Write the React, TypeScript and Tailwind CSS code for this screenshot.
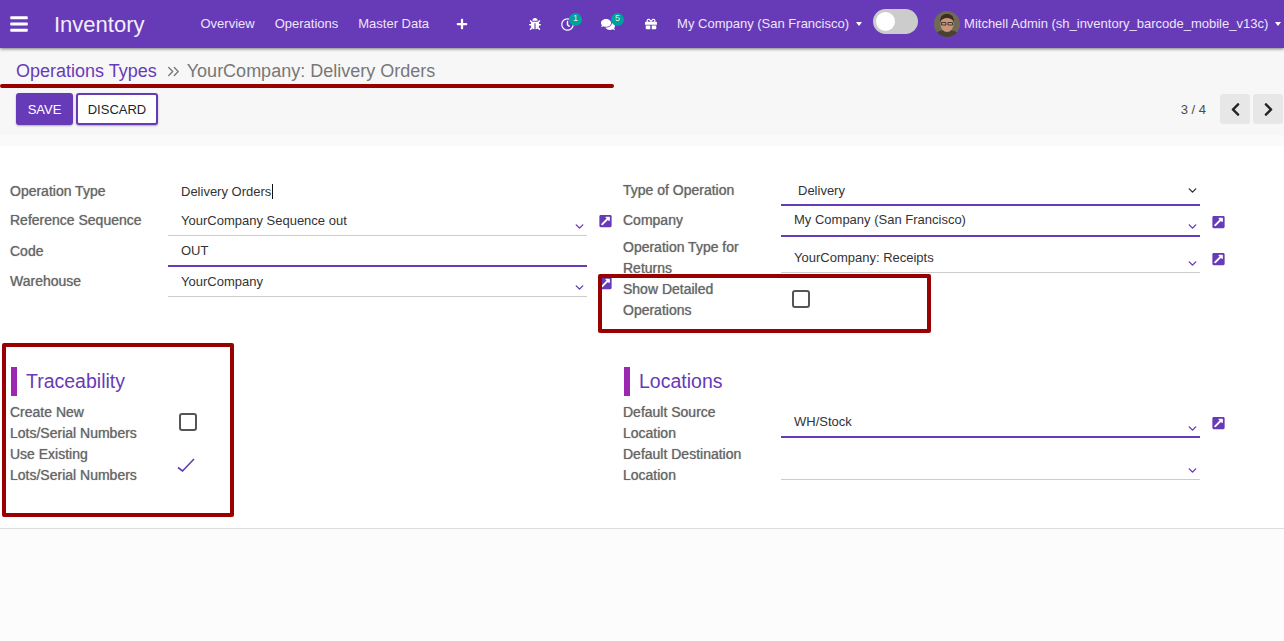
import React from 'react';
import {
  FaBars,
  FaBug,
  FaChevronLeft,
  FaChevronRight,
  FaComments,
  FaExternalLinkSquareAlt,
  FaGift,
  FaPlus,
  FaRegClock,
} from 'react-icons/fa';
import { ChevronDown, ChevronsRight } from 'lucide-react';

const Ext = () => <FaExternalLinkSquareAlt className="h-[14px] w-[13px] text-[#673ab7]" />;

const Caret = ({ className = 'text-[#673ab7]' }: { className?: string }) => (
  <ChevronDown className={`h-[13px] w-[13px] ${className}`} strokeWidth={2.6} />
);

const Label = ({ children, className = '' }: { children: React.ReactNode; className?: string }) => (
  <div className={`w-[158px] shrink-0 pr-[18px] text-[14px] leading-[21px] text-[#666] [text-shadow:0_0_1px_rgba(0,0,0,0.45)] ${className}`}>
    {children}
  </div>
);

const Box = () => <span className="block h-[18px] w-[18px] rounded-[3px] border-2 border-[#555]" />;

const Field = ({
  value,
  active,
  ext,
  extClass = '',
  caretClass = '',
  textClass = '',
  rowClass = 'h-[31px]',
}: {
  value?: string;
  active?: boolean;
  ext?: boolean;
  extClass?: string;
  caretClass?: string;
  textClass?: string;
  rowClass?: string;
}) => (
  <div className="flex shrink-0 items-start">
    <div
      className={`flex w-[419px] shrink-0 items-start justify-between pl-[13px] pr-[1px] text-[13px] leading-[20px] text-[#333] ${rowClass} ${
        active ? 'border-b-2 border-[#673ab7]' : 'border-b border-[#ccc]'
      }`}
    >
      <span className={textClass}>{value}</span>
      <span className={caretClass}><Caret /></span>
    </div>
    {ext && <span className={`ml-[12px] block ${extClass}`}><Ext /></span>}
  </div>
);

const Badge = ({ n, className }: { n: number; className: string }) => (
  <span className={`absolute flex h-[13px] w-[13px] items-center justify-center rounded-full bg-[#00a09d] text-[9px] text-[#e8e8e8] ${className}`}>
    {n}
  </span>
);

const DownTri = ({ className = '' }: { className?: string }) => (
  <span className={`h-0 w-0 border-x-[3.5px] border-t-[4px] border-x-transparent border-t-white ${className}`} />
);

export default function App() {
  return (
    <div className="relative flex h-[641px] w-[1284px] flex-col overflow-hidden bg-white font-['Liberation_Sans',Arial,sans-serif]">
      {/* top bar */}
      <header className="z-10 flex h-[48px] shrink-0 items-center whitespace-nowrap bg-[#673ab7] text-[13px] text-[#eee4fb] shadow-[0_1px_3px_rgba(0,0,0,0.5)]">
        <FaBars className="ml-[10px] h-[20px] w-[18px] text-white" />
        <span className="ml-[26px] text-[22px] text-[#f3eefb]">Inventory</span>
        <nav className="ml-[56px] flex gap-[20px]">
          <span>Overview</span>
          <span>Operations</span>
          <span>Master Data</span>
        </nav>
        <FaPlus className="ml-[27px] h-[12px] w-[12px] text-white" />
        <FaBug className="ml-[61px] h-[12px] w-[12px] text-white" />
        <span className="relative ml-[20px]">
          <FaRegClock className="h-[13px] w-[13px] text-white" />
          <Badge n={1} className="-top-[5px] left-[8px]" />
        </span>
        <span className="relative ml-[27px]">
          <FaComments className="h-[13px] w-[14px] text-white" />
          <Badge n={5} className="-top-[5px] left-[10px]" />
        </span>
        <FaGift className="ml-[30px] h-[12px] w-[12px] text-white" />
        <span className="ml-[20px]">My Company (San Francisco)</span>
        <DownTri className="ml-[7px]" />
        <span className="ml-[11px] mb-[5px] flex h-[25px] w-[45px] items-center rounded-full bg-[#ccc] pl-[3px]">
          <span className="h-[19px] w-[19px] rounded-full bg-white" />
        </span>
        <svg viewBox="0 0 26 26" className="ml-[16px] h-[26px] w-[26px] rounded-full">
          <rect width="26" height="26" fill="#6f6a55" />
          <path d="M0 26c2-6 7-7 13-7s11 1 13 7z" fill="#4a4034" />
          <ellipse cx="13" cy="13" rx="6.5" ry="8" fill="#c8977a" />
          <path d="M6 11c0-6 3-8 7-8s7 2 7 8c-2-3-4-4-7-4s-5 1-7 4z" fill="#3c2c22" />
          <path d="M7.5 11.5h4.5v2.5h-4.5zM14 11.5h4.5v2.5h-4.5z" fill="none" stroke="#2b2320" strokeWidth="0.8" />
        </svg>
        <span className="ml-[4px]">Mitchell Admin (sh_inventory_barcode_mobile_v13c)</span>
        <DownTri className="ml-[7px]" />
      </header>

      {/* control panel */}
      <section className="flex h-[87px] shrink-0 flex-col bg-[#f7f7f7] pl-[16px] pr-[1px]">
        <div className="flex h-[45px] items-center pt-[2px] text-[18px]">
          <span className="text-[#673ab7]">Operations Types</span>
          <ChevronsRight className="ml-[7px] h-[19px] w-[19px] text-[#777]" strokeWidth={1.7} />
          <span className="ml-[4px] text-[#777]">YourCompany: Delivery Orders</span>
        </div>
        <div className="flex items-center justify-between">
          <div className="flex gap-[3px] text-[13px]">
            <button className="h-[32px] w-[57px] rounded-[3px] bg-[#673ab7] pt-[1px] text-white shadow-[0_1px_2px_rgba(0,0,0,0.3)]">SAVE</button>
            <button className="h-[32px] w-[82px] rounded-[3px] border-2 border-[#673ab7] bg-white pt-[1px] text-[#212529] shadow-[0_1px_2px_rgba(0,0,0,0.3)]">DISCARD</button>
          </div>
          <div className="flex items-center text-[13px] text-[#4c4c4c]">
            <span className="pt-[1px]">3 / 4</span>
            <span className="ml-[14px] flex h-[30px] w-[30px] items-center justify-center rounded-[3px] bg-[#e7e7e7]">
              <FaChevronLeft className="h-[15px] w-[15px] text-[#212529]" />
            </span>
            <span className="ml-[3px] flex h-[30px] w-[30px] items-center justify-center rounded-[3px] bg-[#e7e7e7]">
              <FaChevronRight className="h-[15px] w-[15px] text-[#212529]" />
            </span>
          </div>
        </div>
      </section>

      {/* form sheet */}
      <div className="h-[11px] shrink-0 bg-[#fafafa]" />
      <main className="flex h-[383px] shrink-0 flex-col border-b border-[#ddd] pt-[30px]">
        <div className="flex">
          <div className="ml-[10px] flex w-[613px] shrink-0 flex-col">
            <div className="flex h-[29px] items-start">
              <Label className="pt-[5px]">Operation Type</Label>
              <div className="pl-[13px] pt-[6px] text-[13px] leading-[20px] text-[#333]">
                Delivery Orders<span className="ml-[0.5px] border-l border-[#111]" />
              </div>
            </div>
            <div className="flex h-[31px]">
              <Label className="pt-[5px]">Reference Sequence</Label>
              <Field value="YourCompany Sequence out" ext extClass="mt-[9px]" textClass="pt-[6px]" caretClass="pt-[15px]" />
            </div>
            <div className="flex h-[30px]">
              <Label className="pt-[5px]">Code</Label>
              <Field value="OUT" active textClass="pt-[5px]" caretClass="hidden" />
            </div>
            <div className="flex h-[30px]">
              <Label className="pt-[5px]">Warehouse</Label>
              <Field value="YourCompany" ext extClass="mt-[10px]" textClass="pt-[6px]" caretClass="pt-[15px]" />
            </div>
          </div>
          <div className="flex flex-col">
            <div className="flex h-[29px]">
              <Label className="pt-[4px]">Type of Operation</Label>
              <div className="flex h-[30px] w-[419px] justify-between border-b-2 border-[#673ab7] pl-[17px] pr-[1px] pt-[5px] text-[13px] leading-[20px] text-[#333]">
                <span>Delivery</span>
                <span className="pt-[3px]"><Caret className="text-[#333]" /></span>
              </div>
            </div>
            <div className="flex h-[31px]">
              <Label className="pt-[5px]">Company</Label>
              <Field value="My Company (San Francisco)" active ext extClass="mt-[10px]" rowClass="h-[32px]" textClass="pt-[5px]" caretClass="pt-[15px]" />
            </div>
            <div className="flex h-[42px]">
              <Label className="pt-[1px]">Operation Type for Returns</Label>
              <Field value="YourCompany: Receipts" ext extClass="mt-[16px]" rowClass="h-[37px]" textClass="pt-[12px]" caretClass="pt-[21px]" />
            </div>
            <div className="flex h-[42px] items-start">
              <Label className="pt-[1px]">Show Detailed Operations</Label>
              <span className="ml-[11px] mt-[12px]"><Box /></span>
            </div>
          </div>
        </div>

        <div className="mt-[47px] flex">
          <div className="ml-[11px] flex w-[612px] shrink-0 flex-col">
            <h2 className="flex h-[29px] items-center border-l-[6px] border-[#9c27b0] pl-[9px] text-[19.5px] text-[#673ab7]">Traceability</h2>
            <div className="-ml-[1px] mt-[6px] flex h-[42px]">
              <Label>Create New Lots/Serial Numbers</Label>
              <span className="ml-[11px] mt-[11px]"><Box /></span>
            </div>
            <div className="-ml-[1px] flex h-[42px]">
              <Label>Use Existing Lots/Serial Numbers</Label>
              <svg viewBox="0 0 18 14" className="ml-[9px] mt-[14px] h-[14px] w-[18px]" fill="none" stroke="#673ab7" strokeWidth="1.6">
                <path d="M1 9.5 5.5 13 17 1" />
              </svg>
            </div>
          </div>
          <div className="flex flex-col">
            <h2 className="ml-[1px] flex h-[29px] w-fit items-center border-l-[6px] border-[#9c27b0] pl-[9px] text-[19.5px] text-[#673ab7]">Locations</h2>
            <div className="mt-[6px] flex h-[42px]">
              <Label>Default Source Location</Label>
              <Field value="WH/Stock" active ext extClass="mt-[14px]" rowClass="h-[36px]" textClass="pt-[10px]" caretClass="pt-[20px]" />
            </div>
            <div className="flex h-[42px]">
              <Label>Default Destination Location</Label>
              <Field rowClass="h-[36px]" caretClass="pt-[20px]" />
            </div>
          </div>
        </div>
      </main>
      <div className="flex-1 bg-[#fcfcfc]" />

      {/* red annotations drawn over the screenshot */}
      <div className="absolute left-0 top-[84px] h-[4px] w-[614px] rounded-full bg-[#990000]" />
      <div className="absolute left-[598px] top-[274px] h-[59px] w-[333px] rounded-[2px] border-4 border-[#990000]" />
      <div className="absolute left-[2px] top-[343px] h-[174px] w-[232px] rounded-[2px] border-4 border-[#990000]" />
    </div>
  );
}
